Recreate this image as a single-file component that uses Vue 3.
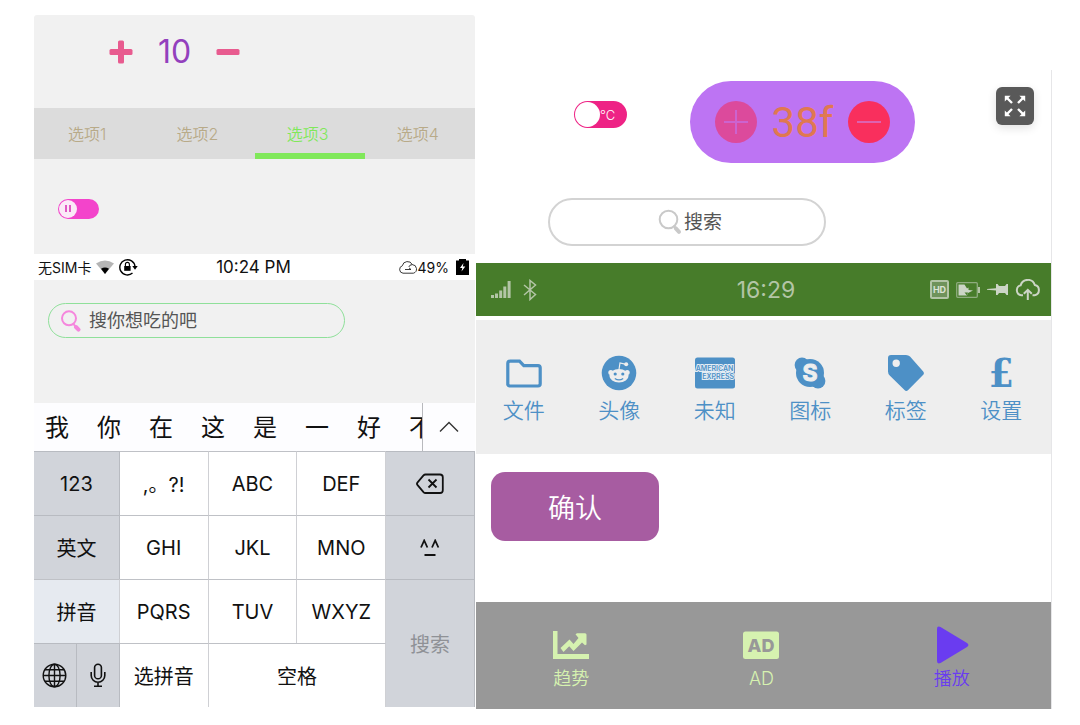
<template>
  <div class="app">
    <section class="panel left">
      <div class="counter">
        <button class="plain" aria-label="+" @click="count++">
          <svg width="24" height="24" viewBox="0 0 24 24" fill="#e85b8f">
            <rect x="9" y="0.5" width="6" height="23" rx="1.5" />
            <rect x="0.5" y="9" width="23" height="6" rx="1.5" />
          </svg>
        </button>
        <output>{{ count }}</output>
        <button class="plain" aria-label="-" @click="count--">
          <svg width="24" height="24" viewBox="0 0 24 24" fill="#e85b8f">
            <rect x="0.5" y="9" width="23" height="6" rx="1.5" />
          </svg>
        </button>
      </div>

      <nav class="tabs">
        <button
          v-for="(tab, i) in tabs"
          :key="tab"
          :class="{ active: activeTab === i }"
          @click="activeTab = i"
        >
          {{ tab }}
        </button>
      </nav>

      <div class="switch-row">
        <label class="switch pause">
          <input v-model="paused" type="checkbox" role="switch" aria-label="pause" />
          <span class="knob"><i></i><i></i></span>
        </label>
      </div>

      <div class="status">
        <div class="status-side">
          <span>无SIM卡</span>
          <svg width="18" height="14" viewBox="0 0 18 14">
            <path d="M0 3.5Q9-2.5 18 3.5L9 14Z" fill="#b5b5b5" />
            <path d="M5 8.7Q9 6.2 13 8.7L9 14Z" fill="#000" />
          </svg>
          <svg width="19" height="18" viewBox="0 0 19 18" fill="none" stroke="#000">
            <path d="M13.5 15A7.6 7.6 0 1 1 16 8.5" stroke-width="1.4" />
            <path d="M13.3 8H18.7L16 11.8Z" fill="#000" stroke="none" />
            <rect x="5.2" y="8" width="6.4" height="4.8" fill="#000" stroke="none" />
            <path d="M6.4 8V6.4a2 2 0 0 1 4 0V8" stroke-width="1.1" />
          </svg>
        </div>
        <time>10:24 PM</time>
        <div class="status-side end">
          <svg width="20" height="14" viewBox="0 0 20 14" fill="none" stroke="#222" stroke-width="0.9">
            <path d="M5 13.2A3.8 3.8 0 0 1 4.3 5.8 5.3 5.3 0 0 1 14.3 4.6 4.4 4.4 0 0 1 15.4 13.2Z" />
            <path d="M14.3 4.6Q11.5 4.6 10.8 7M7 9.5h6l-2-1.6" />
          </svg>
          <span>49%</span>
          <svg class="charge" width="13" height="16" viewBox="0 0 13 16">
            <path d="M0 1.5H3V0h7v1.5h3V16H0Z" fill="#000" />
            <path d="M7.5 4 4 9h2.3L5.5 12.5 9.3 7.4H6.8Z" fill="#fff" />
          </svg>
        </div>
      </div>

      <div class="food">
        <label class="search food-search">
          <svg width="20" height="22" viewBox="0 0 20 22" fill="none" stroke="#f587dd" stroke-linecap="round">
            <circle cx="8" cy="8.3" r="7" stroke-width="2" />
            <path d="M12.5 14.2 14.5 16.4" stroke-width="2" />
            <path d="M15 17 17.5 19.6" stroke-width="4" />
          </svg>
          <input type="text" placeholder="搜你想吃的吧" aria-label="搜你想吃的吧" />
        </label>
      </div>

      <div class="keyboard">
        <div class="candidates">
          <div class="words">
            <button v-for="word in words" :key="word">{{ word }}</button>
          </div>
          <button class="expand" aria-label="展开">
            <svg width="20" height="12" viewBox="0 0 20 12" fill="none" stroke="#333" stroke-width="1.4">
              <path d="M1 10.5 10 1.5 19 10.5" />
            </svg>
          </button>
        </div>
        <div class="keys">
          <button class="dark">123</button>
          <button>,。?!</button>
          <button>ABC</button>
          <button>DEF</button>
          <button class="dark" aria-label="删除">
            <svg width="28" height="22" viewBox="0 0 28 22" fill="none" stroke="#111" stroke-width="1.8">
              <path
                d="M9.5 1.5H24a2.8 2.8 0 0 1 2.8 2.8V17.2A2.8 2.8 0 0 1 24 20H9.5a2.8 2.8 0 0 1-2-.9L1.6 12.2a2.2 2.2 0 0 1 0-2.9L7.5 2.4a2.8 2.8 0 0 1 2-.9Z"
                stroke-linejoin="round"
              />
              <path d="M12.5 6.5 20.5 14.5M20.5 6.5 12.5 14.5" />
            </svg>
          </button>
          <button class="dark">英文</button>
          <button>GHI</button>
          <button>JKL</button>
          <button>MNO</button>
          <button class="dark" aria-label="表情">
            <svg width="20" height="18" viewBox="0 0 20 18" fill="none" stroke="#111" stroke-width="1.8">
              <path d="M1 8.5 4.2 1.5 7.4 8.5M12 8.5 15.2 1.5 18.4 8.5M4.5 16H15.5" />
            </svg>
          </button>
          <button class="light">拼音</button>
          <button>PQRS</button>
          <button>TUV</button>
          <button>WXYZ</button>
          <button class="dark go">搜索</button>
          <div class="pair">
            <button class="dark" aria-label="语言">
              <svg width="25" height="25" viewBox="0 0 25 25" fill="none" stroke="#111" stroke-width="1.4">
                <circle cx="12.5" cy="12.5" r="11.3" />
                <ellipse cx="12.5" cy="12.5" rx="5.6" ry="11.3" />
                <path d="M12.5 1.2V23.8M1.2 12.5H23.8M3 6.8H22M3 18.2H22" />
              </svg>
            </button>
            <button class="dark" aria-label="语音">
              <svg width="16" height="25" viewBox="0 0 16 25" fill="none" stroke="#111" stroke-width="1.6">
                <rect x="4.6" y="1.2" width="6.8" height="14.6" rx="3.4" />
                <path d="M1.2 9V12.5a6.8 6.8 0 0 0 13.6 0V9M8 19.3V23M4 23.2H12" />
              </svg>
            </button>
          </div>
          <button>选拼音</button>
          <button class="space">空格</button>
        </div>
      </div>
    </section>

    <section class="panel right">
      <div class="top">
        <div class="controls">
          <label class="switch unit">
            <input v-model="celsius" type="checkbox" role="switch" aria-label="°C" />
            <span class="knob"></span>
            <span class="unit-text">°C</span>
          </label>
          <div class="thermo">
            <button class="round faded" aria-label="+" @click="degrees++">
              <svg width="24" height="24" viewBox="0 0 24 24" stroke="#cc63cf" stroke-width="2">
                <path d="M12 0V24M0 12H24" />
              </svg>
            </button>
            <output>{{ degrees }}f</output>
            <button class="round" aria-label="-" @click="degrees--">
              <svg width="24" height="24" viewBox="0 0 24 24" stroke="#dd62b0" stroke-width="2">
                <path d="M0 12H24" />
              </svg>
            </button>
          </div>
          <button class="fullscreen" aria-label="全屏">
            <svg width="22" height="22" viewBox="0 0 22 22" fill="#fff" stroke="#fff" stroke-width="2.4">
              <path d="M2.5 2.5 8 8M19.5 2.5 14 8M2.5 19.5 8 14M19.5 19.5 14 14" />
              <path
                d="M.8.8H6.6L.8 6.6ZM21.2.8V6.6L15.4.8ZM.8 21.2V15.4L6.6 21.2ZM21.2 21.2H15.4L21.2 15.4Z"
                stroke="none"
              />
            </svg>
          </button>
        </div>
        <label class="search main-search">
          <svg width="24" height="26" viewBox="0 0 24 26" fill="none" stroke="#c9c9c9" stroke-linecap="round">
            <circle cx="10.5" cy="10.5" r="8.8" stroke-width="2" />
            <path d="M16 17.3 17.6 19" stroke-width="2" />
            <path d="M17.8 19.3 21 22.8" stroke-width="4" />
          </svg>
          <input type="text" placeholder="搜索" aria-label="搜索" />
        </label>
      </div>

      <div class="status-green">
        <div class="status-side">
          <svg width="20" height="17" viewBox="0 0 20 17" fill="#b3c5a6">
            <rect x="0" y="14" width="3" height="3" />
            <rect x="4" y="12.5" width="3" height="4.5" />
            <rect x="8.2" y="9.5" width="3" height="7.5" />
            <rect x="12.3" y="5.5" width="3" height="11.5" />
            <rect x="16.6" y="0" width="3" height="17" />
          </svg>
          <svg width="14" height="22" viewBox="0 0 14 22" fill="none" stroke="#b3c5a6" stroke-width="1.5">
            <path d="M1 6 12.5 15.5 7 20.5V1.5L12.5 6 1 16" />
          </svg>
        </div>
        <time>16:29</time>
        <div class="status-side end">
          <svg width="19" height="19" viewBox="0 0 19 19">
            <rect x="1" y="1" width="17" height="17" rx="1" fill="#6f935b" stroke="#b3c5a6" stroke-width="2" />
            <text x="9.5" y="12.8" text-anchor="middle" font-size="9" font-weight="700" fill="#dbe3d5">HD</text>
          </svg>
          <svg width="24" height="16" viewBox="0 0 24 16">
            <rect x="0.7" y="0.7" width="20.6" height="14.6" rx="1" fill="none" stroke="#8fac7f" stroke-width="1.3" />
            <path d="M2.5 2.5H8.5L11 6.5 12.5 5.5V8L17 8.5 12 11 11 13.5H2.5Z" fill="#ccd5c6" />
            <path d="M8.5 10.5H12L11 13.5Z" fill="#477c2a" />
            <rect x="22" y="5" width="2" height="6" fill="#b3c5a6" />
          </svg>
          <svg width="21" height="11" viewBox="0 0 21 11" fill="#ccd5c6">
            <path d="M0 5 9 4.3V0h1.6L12 2h6L19.5 0H21V11H19.5L18 9H12L10.6 11H9V6.5L0 5.8Z" />
          </svg>
          <svg width="26" height="21" viewBox="0 0 26 21" fill="none" stroke="#ccd5c6" stroke-width="2">
            <path d="M8 16.2H6.2A5 5 0 0 1 5.6 6.4 7.4 7.4 0 0 1 19.8 6 5.2 5.2 0 0 1 19.6 16.2H17.5" />
            <path d="M12.8 21V11.5M8.8 14.8 12.8 10.8 16.8 14.8" />
          </svg>
        </div>
      </div>

      <nav class="menu">
        <a href="#files">
          <svg width="36" height="36" viewBox="0 0 36 36" fill="none" stroke="#4d90c6" stroke-width="3.2">
            <path d="M1.8 30V8.5Q1.8 6.2 4 6.2H13.5L17.8 10.6H32Q34.2 10.6 34.2 12.8V28.8Q34.2 31 32 31H4Q1.8 31 1.8 28.8Z" />
          </svg>
          文件
        </a>
        <a href="#avatar">
          <svg width="36" height="36" viewBox="0 0 36 36">
            <circle cx="18" cy="18" r="17.3" fill="#4d90c6" />
            <g fill="#eee">
              <circle cx="9.8" cy="17.4" r="2.5" />
              <circle cx="26.2" cy="17.4" r="2.5" />
              <ellipse cx="18" cy="20.8" rx="9.6" ry="6.7" />
              <circle cx="25.2" cy="9.3" r="2" />
            </g>
            <path d="M18 14.5 19 8 24 9.2" fill="none" stroke="#eee" stroke-width="1.2" />
            <circle cx="14.2" cy="19" r="1.6" fill="#4d90c6" />
            <circle cx="21.8" cy="19" r="1.6" fill="#4d90c6" />
            <path d="M13.8 23.4Q18 26.2 22.2 23.4" fill="none" stroke="#4d90c6" stroke-width="1.2" />
          </svg>
          头像
        </a>
        <a href="#unknown">
          <svg width="42" height="36" viewBox="0 0 42 36">
            <rect x="1" y="2.5" width="40" height="31" rx="2.5" fill="#4d90c6" />
            <g fill="#4d90c6" stroke="#e4edf4" stroke-width="2" paint-order="stroke" font-size="7" font-weight="600">
              <text x="20.5" y="15.8" text-anchor="middle">AMERICAN</text>
              <text x="40" y="24.2" text-anchor="end">EXPRESS</text>
            </g>
          </svg>
          未知
        </a>
        <a href="#icons">
          <svg width="36" height="36" viewBox="0 0 36 36">
            <g fill="#4d90c6">
              <circle cx="10" cy="10" r="7.4" />
              <circle cx="26" cy="26" r="7.4" />
              <circle cx="18" cy="18" r="14" />
            </g>
            <text x="18" y="26" text-anchor="middle" font-size="23" font-weight="700" fill="#eee" stroke="#eee">S</text>
          </svg>
          图标
        </a>
        <a href="#tags">
          <svg width="36" height="36" viewBox="0 0 36 36" fill="#4d90c6">
            <path
              fill-rule="evenodd"
              d="M3 0H18Q20.5 0 22 1.5L35 16.2Q36.8 18.2 35 20L20.2 35Q18.2 36.8 16.5 35L1.7 20.5Q0 18.8 0 16.5V3Q0 0 3 0ZM8.2 4.6A3.7 3.7 0 1 0 8.2 12 3.7 3.7 0 1 0 8.2 4.6Z"
            />
          </svg>
          标签
        </a>
        <a href="#settings">
          <span class="pound">£</span>
          设置
        </a>
      </nav>

      <div class="confirm">
        <button>确认</button>
      </div>

      <nav class="bottom">
        <a href="#trend">
          <svg width="40" height="40" viewBox="0 0 40 40" fill="#d6f2b0">
            <path d="M2 6H6.5V29H38V34H2Z" />
            <path d="M9.5 23 18.5 14.5 22.5 19 27.5 13 24.5 9.2 26 8.2H34Q35.5 8.2 35.5 9.8V19.5L34 20.2 31 17.5 22.5 26 18.2 21.2 12.5 27Z" />
          </svg>
          趋势
        </a>
        <a href="#ad">
          <svg width="40" height="40" viewBox="0 0 40 40">
            <rect x="2" y="6.5" width="36" height="27.5" rx="2.5" fill="#d6f2b0" />
            <text class="ad" x="20" y="26.6" text-anchor="middle">AD</text>
          </svg>
          AD
        </a>
        <a href="#play" class="play">
          <svg width="40" height="40" viewBox="0 0 40 40" fill="#6a3cf0">
            <path d="M5 4Q5 .5 8.5 2L35 18Q37.8 20 35 22L8.5 38Q5 39.5 5 36Z" />
          </svg>
          播放
        </a>
      </nav>
    </section>
  </div>
</template>

<script setup>
import { ref } from "vue";

const count = ref(10);
const degrees = ref(38);
const paused = ref(false);
const celsius = ref(false);

const tabs = ["选项1", "选项2", "选项3", "选项4"];
const activeTab = ref(2);

const words = ["我", "你", "在", "这", "是", "一", "好", "不"];
</script>

<style>
body {
  margin: 0;
  background: #fff;
}
</style>

<style scoped>
.app {
  display: grid;
  grid-template-columns: 441fr 576fr;
  column-gap: 1px;
  align-items: start;
  padding: 15px 28px 16px 34px;
  font-family: Inter, "Noto Sans CJK SC", sans-serif;
  color: #111;
}

.app * {
  box-sizing: border-box;
}

button,
input {
  margin: 0;
  padding: 0;
  border: 0;
  background: none;
  font: inherit;
  color: inherit;
}

button {
  display: flex;
  align-items: center;
  justify-content: center;
  cursor: pointer;
}

a {
  text-decoration: none;
  color: inherit;
}

svg {
  display: block;
  flex: none;
}

.panel {
  min-width: 0;
}

.left {
  background: #f1f1f1;
  border-radius: 3px 3px 0 0;
}

.right {
  margin-top: 55px;
  border-right: 1px solid #e6e6e8;
}

/* счётчик и вкладки */
.counter {
  display: flex;
  align-items: center;
  gap: 25px;
  height: 93px;
  padding: 0 75px 20px;
  font-size: 32px;
  color: #9340bd;
}

.tabs {
  display: grid;
  grid-template-columns: repeat(4, 1fr);
  background: #dcdcdc;
}

.tabs button {
  height: 51px;
  padding-right: 4px;
  border-top: 4px solid transparent;
  border-bottom: 6px solid transparent;
  font-size: 16px;
  font-weight: 350;
  color: #b8aa88;
}

.tabs .active {
  color: #80e85a;
  border-bottom-color: #80e85a;
}

/* переключатели */
.switch {
  display: flex;
  align-items: center;
  position: relative;
  cursor: pointer;
}

.switch input {
  position: absolute;
  inset: 0;
  opacity: 0;
}

.switch:has(input:checked) {
  flex-direction: row-reverse;
}

.knob {
  display: flex;
  align-items: center;
  justify-content: center;
  gap: 2px;
  border-radius: 50%;
  background: #fff;
}

.switch-row {
  display: flex;
  align-items: center;
  height: 95px;
  padding: 4px 24px 0;
}

.pause {
  width: 41px;
  height: 20px;
  padding: 1px;
  border-radius: 10px;
  background: #f344cb;
}

.pause .knob {
  width: 18px;
  height: 18px;
  background: #fbeaf7;
}

.pause i {
  width: 2px;
  height: 7px;
  background: #e05ac4;
}

.unit {
  width: 53px;
  height: 27px;
  padding: 1px;
  border-radius: 14px;
  background: #ee2385;
}

.unit .knob {
  width: 25px;
  height: 25px;
}

.unit-text {
  font-size: 13px;
  font-weight: 300;
  color: #fff;
}

/* строка состояния слева */
.status {
  display: grid;
  grid-template-columns: 1fr auto 1fr;
  align-items: center;
  height: 26px;
  padding: 0 6px 0 4px;
  background: #fff;
  font-size: 14px;
}

.status time {
  font-size: 17px;
}

.status-side {
  display: flex;
  align-items: center;
  gap: 5px;
}

.end {
  justify-content: flex-end;
}

.status .end {
  gap: 0;
}

.charge {
  margin-left: 7px;
}

/* поиск */
.search {
  display: flex;
  align-items: center;
}

.search input {
  min-width: 0;
  outline: none;
}

.search input::placeholder {
  color: #555;
  opacity: 1;
}

.food {
  padding: 23px 14px 65px;
}

.food-search {
  gap: 8px;
  width: 72%;
  height: 35px;
  padding: 0 12px;
  border: 1px solid #8fe09a;
  border-radius: 18px;
  font-size: 18px;
}

.food-search input {
  flex: 1;
}

/* клавиатура */
.candidates {
  display: flex;
  height: 48px;
  background: #fdfdff;
}

.words {
  display: flex;
  flex: 1;
  min-width: 0;
  gap: 28px;
  padding: 0 0 4px 11px;
  overflow: hidden;
  border-right: 1px solid #b8b9bd;
}

.words button {
  flex: none;
  width: 24px;
  font-size: 24px;
}

.expand {
  width: 52px;
}

.keys {
  display: grid;
  grid-template-columns: 86fr 89fr 89fr 89fr 89fr;
  grid-auto-rows: 64px;
  background: #fff;
}

.keys button {
  border-top: 1px solid #bfc1c6;
  border-right: 1px solid #cfd0d4;
  font-size: 20px;
}

.keys .dark {
  background: #d1d4da;
  border-color: #b8bbc1;
}

.keys .light {
  background: #e6eaf0;
}

.keys .go {
  grid-row: span 2;
  color: #8f9196;
}

.pair {
  display: grid;
  grid-template-columns: 1fr 1fr;
}

.keys .space {
  grid-column: span 2;
}

/* правая панель */
.top {
  display: flex;
  flex-direction: column;
  gap: 35px;
  padding: 11px 17px 17px 72px;
}

.controls {
  display: flex;
  align-items: flex-start;
}

.unit {
  margin: 20px 63px 0 26px;
}

.thermo {
  display: flex;
  align-items: center;
  justify-content: space-between;
  width: 225px;
  height: 82px;
  padding: 0 25px;
  border-radius: 41px;
  background: #bd74f3;
  font-family: Roboto, sans-serif;
  font-size: 42px;
  color: #e07850;
}

.round {
  width: 42px;
  height: 42px;
  border-radius: 50%;
  background: #f92f5d;
}

.faded {
  background: #dc4a9c;
}

.fullscreen {
  width: 38px;
  height: 38px;
  margin: 6px 0 0 auto;
  border-radius: 6px;
  background: #595959;
  box-shadow: 0 3px 10px rgba(0, 0, 0, 0.12);
}

.main-search {
  justify-content: center;
  gap: 2px;
  width: 278px;
  height: 48px;
  padding-left: 8px;
  border: 2px solid #d3d3d3;
  border-radius: 24px;
  font-size: 19px;
}

.main-search input {
  width: 40px;
}

.status-green {
  display: grid;
  grid-template-columns: 1fr auto 1fr;
  align-items: center;
  height: 53px;
  padding: 0 10px 0 15px;
  background: #477c2a;
  color: #b3c5a6;
}

.status-green time {
  font-size: 23px;
}

.status-green .status-side {
  gap: 12px;
}

.status-green .end {
  gap: 7px;
}

.menu,
.bottom {
  display: grid;
  grid-auto-flow: column;
  grid-auto-columns: 1fr;
}

.menu a,
.bottom a {
  display: flex;
  flex-direction: column;
  align-items: center;
}

.menu {
  margin-top: 4px;
  padding: 35px 2px 31px 0;
  background: #eee;
  font-size: 21px;
  font-weight: 350;
  line-height: 24px;
  color: #4d90c6;
}

.menu a {
  gap: 8px;
}

.pound {
  height: 36px;
  font-family: "DejaVu Serif Condensed", "DejaVu Serif", serif;
  font-size: 40px;
  font-weight: 700;
  line-height: 36px;
}

.confirm {
  padding: 18px 15px 61px;
}

.confirm button {
  width: 168px;
  height: 69px;
  border-radius: 14px;
  background: #a75ca1;
  color: #fff;
  font-size: 27px;
  font-weight: 350;
}

.bottom {
  padding: 23px 4px 19px 0;
  background: #989898;
  font-size: 18px;
  font-weight: 350;
  line-height: 22px;
  color: #d6f2b0;
}

.bottom a {
  gap: 3px;
}

.ad {
  font-size: 18px;
  font-weight: 800;
  fill: #989898;
}

.bottom .play {
  color: #6a3cf0;
}
</style>
